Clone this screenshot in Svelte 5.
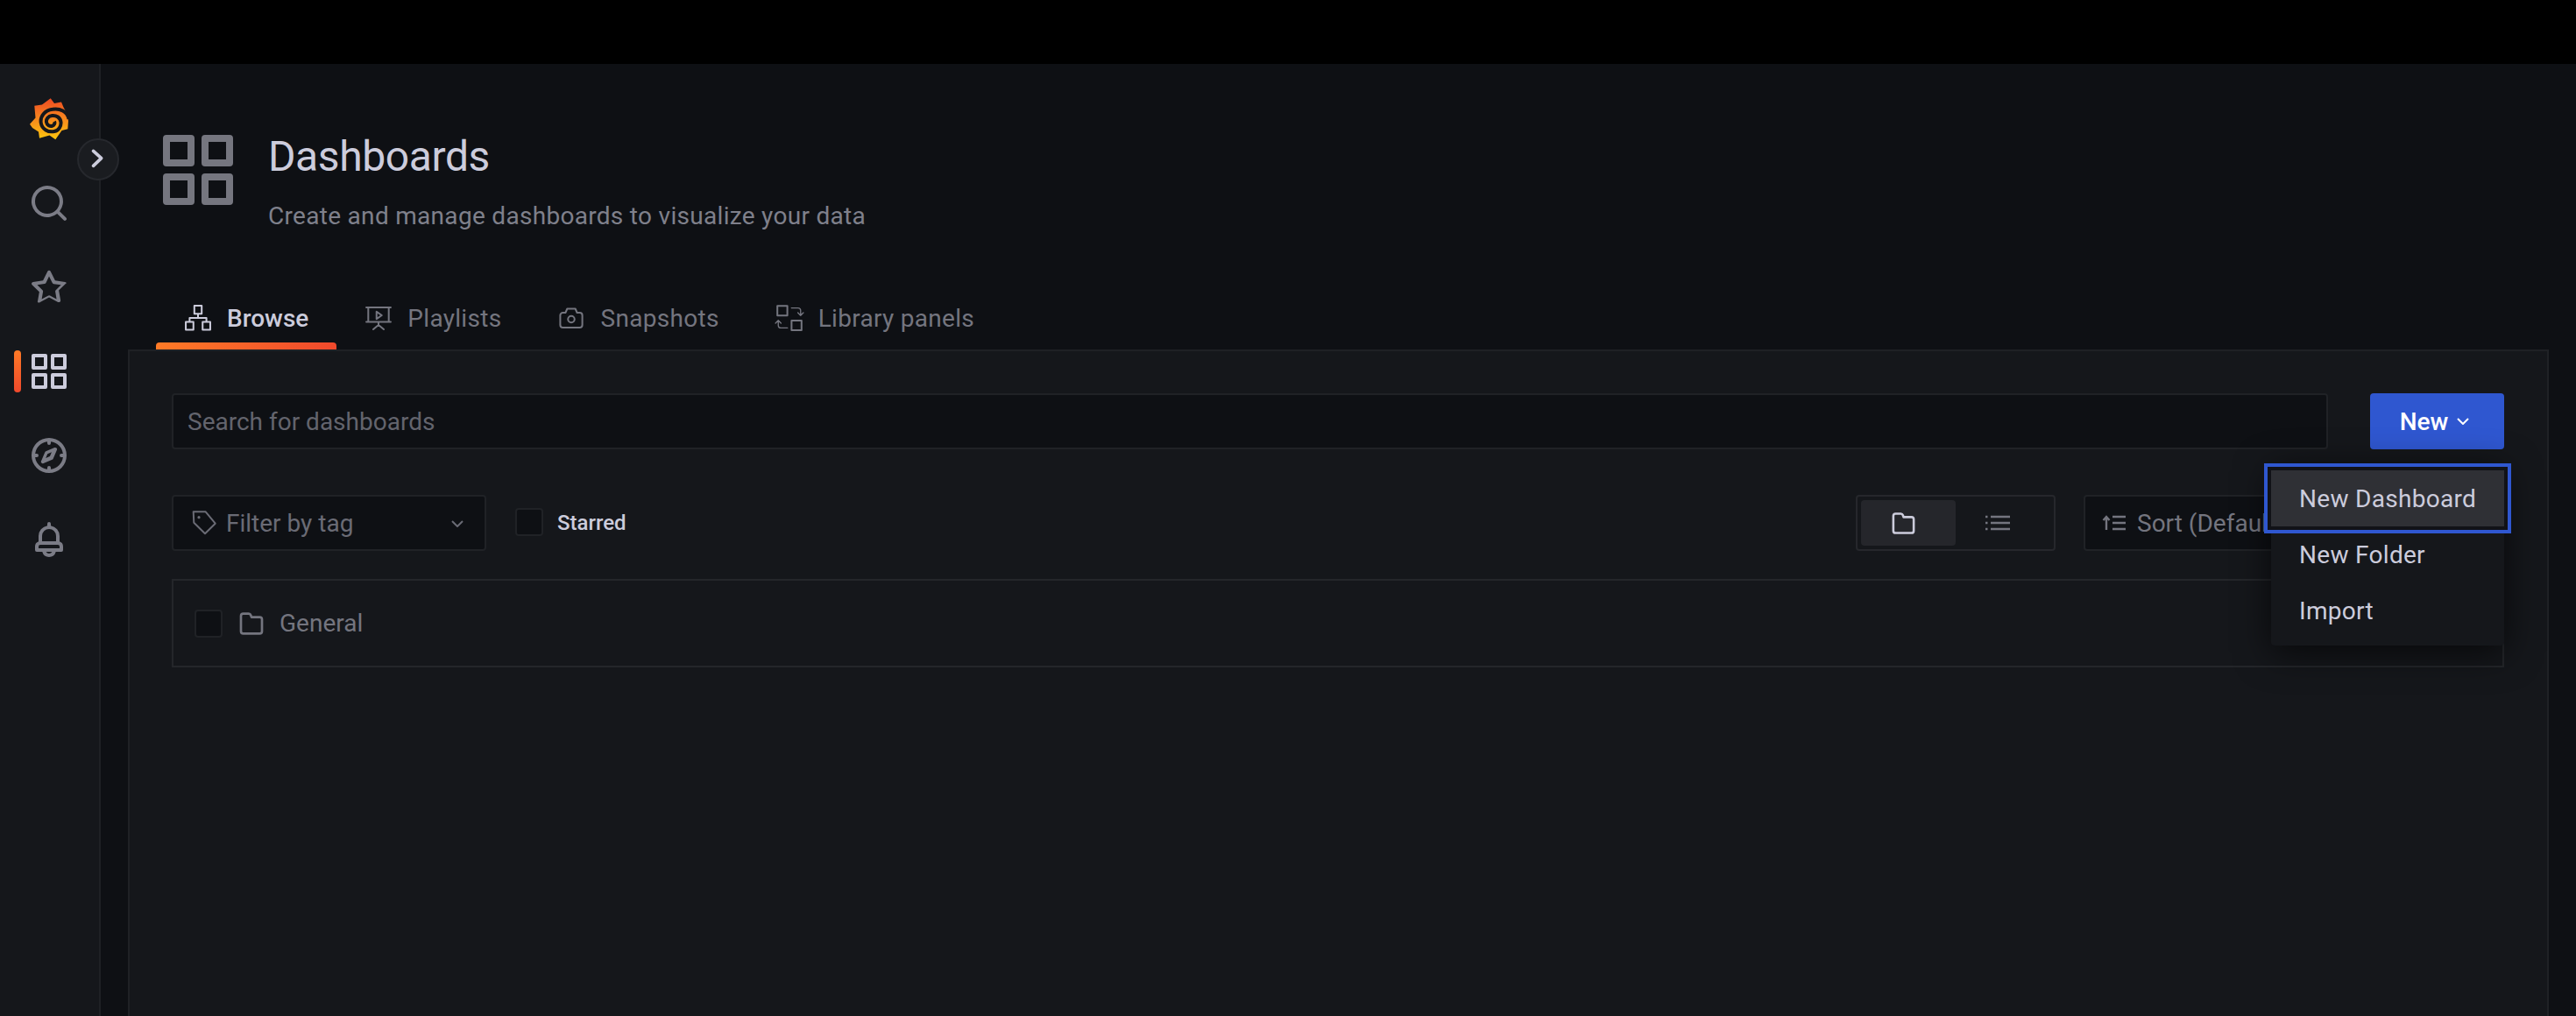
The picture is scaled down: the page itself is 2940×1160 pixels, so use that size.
<script>
  // unicons style paths, viewBox 24
  const apps = "M10,13H3a1,1,0,0,0-1,1v7a1,1,0,0,0,1,1h7a1,1,0,0,0,1-1V14A1,1,0,0,0,10,13ZM9,20H4V15H9ZM21,2H14a1,1,0,0,0-1,1v7a1,1,0,0,0,1,1h7a1,1,0,0,0,1-1V3A1,1,0,0,0,21,2ZM20,9H15V4h5Zm1,4H14a1,1,0,0,0-1,1v7a1,1,0,0,0,1,1h7a1,1,0,0,0,1-1V14A1,1,0,0,0,21,13Zm-1,7H15V15h5ZM10,2H3A1,1,0,0,0,2,3v7a1,1,0,0,0,1,1h7a1,1,0,0,0,1-1V3A1,1,0,0,0,10,2ZM9,9H4V4H9Z";
  const folder = "M19,5.5H12.72l-.32-1a3,3,0,0,0-2.84-2H5a3,3,0,0,0-3,3v13a3,3,0,0,0,3,3H19a3,3,0,0,0,3-3V8.5A3,3,0,0,0,19,5.5Zm1,13a1,1,0,0,1-1,1H5a1,1,0,0,1-1-1V5.5a1,1,0,0,1,1-1H9.56a1,1,0,0,1,.95.68l.54,1.64A1,1,0,0,0,12,7.5h7a1,1,0,0,1,1,1Z";

  const nav = [
    { name: "search", d: "M21.71,20.29,18,16.61A9,9,0,1,0,16.61,18l3.68,3.68a1,1,0,0,0,1.42,0A1,1,0,0,0,21.71,20.29ZM11,18a7,7,0,1,1,7-7A7,7,0,0,1,11,18Z" },
    { name: "star", d: "M22,9.67A1,1,0,0,0,21.14,9l-5.69-.83L12.9,3a1,1,0,0,0-1.8,0L8.55,8.16,2.86,9a1,1,0,0,0-.81.68,1,1,0,0,0,.25,1l4.13,4-1,5.68A1,1,0,0,0,6.9,20.44L12,17.77l5.1,2.67a.93.93,0,0,0,.46.12,1,1,0,0,0,.59-.19,1,1,0,0,0,.4-1l-1-5.68,4.13-4A1,1,0,0,0,22,9.67Zm-6.15,4a1,1,0,0,0-.29.88l.72,4.2-3.76-2a1.06,1.06,0,0,0-.94,0l-3.76,2,.72-4.2a1,1,0,0,0-.29-.88l-3-3,4.21-.61a1,1,0,0,0,.76-.55L12,5.7l1.88,3.82a1,1,0,0,0,.76.55l4.21.61Z" },
    { name: "dashboards", d: apps, active: true },
    { name: "explore", d: "M12,2A10,10,0,1,0,22,12,10,10,0,0,0,12,2Zm1,17.93V19a1,1,0,0,0-2,0v.93A8,8,0,0,1,4.07,13H5a1,1,0,0,0,0-2H4.07A8,8,0,0,1,11,4.07V5a1,1,0,0,0,2,0V4.07A8,8,0,0,1,19.93,11H19a1,1,0,0,0,0,2h.93A8,8,0,0,1,13,19.93ZM15.14,7.55l-5,2.12a1,1,0,0,0-.53.53l-2.12,5a1,1,0,0,0,.21,1.1,1,1,0,0,0,.71.3.93.93,0,0,0,.4-.08l5-2.12a1,1,0,0,0,.53-.53l2.12-5a1,1,0,0,0-1.32-1.32Zm-2.68,4.91-2.35,1,1-2.35,2.35-1Z" },
    { name: "alerts", d: "M18,13.18V10a6,6,0,0,0-5-5.91V3a1,1,0,0,0-2,0V4.09A6,6,0,0,0,6,10v3.18A3,3,0,0,0,4,16v2a1,1,0,0,0,1,1H8.14a4,4,0,0,0,7.72,0H19a1,1,0,0,0,1-1V16A3,3,0,0,0,18,13.18ZM8,10a4,4,0,0,1,8,0v3H8ZM12,20a2,2,0,0,1-1.72-1h3.44A2,2,0,0,1,12,20Zm6-3H6V16a1,1,0,0,1,1-1H17a1,1,0,0,1,1,1Z" }
  ];

  const tabs = [
    { label: "Browse", active: true, icon: "M9.2 2.7h5.6v6.2H9.2zM2.7 15h5.8v6H2.7zM15.5 15h5.8v6h-5.8zM12 9v3M5.6 15v-3h12.8v3" },
    { label: "Playlists", icon: "M2.7 4h18.6M4.2 4v11M19.8 4v11M2.7 15h18.6M12 15v2.3M8 20.7l4-3.4 4 3.4M10.5 7.2v5.6l4-2.8z" },
    { label: "Snapshots", icon: "M5.6 8h2l1.3-3h6.2l1.3 3h2a2 2 0 0 1 2 2v7.4a2 2 0 0 1-2 2H5.6a2 2 0 0 1-2-2V10a2 2 0 0 1 2-2zM14.5 13a2.5 2.5 0 1 1-5 0 2.5 2.5 0 0 1 5 0z" },
    { label: "Library panels", icon: "M2.8 2.8h7.6v7.4H2.8zM13.6 14h7.6v7.4h-7.6z", thin: "M13.5 4.4h5a2 2 0 0 1 2 2v3.4M18.4 8l2.1 2.2L22.6 8M10.5 19.6h-5a2 2 0 0 1-2-2v-3.4M1.4 16l2.1-2.2L5.6 16" }
  ];

  const menuItems = ["New Dashboard", "New Folder", "Import"];
</script>

<div class="page">
  <div class="topbar"></div>
  <div class="shell">
    <aside class="sidebar">
      <svg class="logo" viewBox="0 0 44 48" width="44" height="48">
        <defs>
          <linearGradient id="logo-grad" x1="0" y1="0" x2="0" y2="1">
            <stop offset="0" stop-color="#ee4a22" />
            <stop offset="0.45" stop-color="#f6821f" />
            <stop offset="1" stop-color="#fcc60e" />
          </linearGradient>
        </defs>
        <path fill="url(#logo-grad)" d="M23.7 .3 L28 6 L36 4.5 L38.5 10.5 L42 17 L44 26 L43.3 35.3 L36.5 37 L29.3 47.3 L22.5 42.5 L11 45.7 L10 38.5 L3 34 L0 29.7 L6.5 22.5 L5.3 8.7 L14 7.5 Z" />
        <path fill="none" stroke="#15171b" stroke-width="4" d="M44.5 24 C43 15 34 11.5 26 12.8 C17 14 11.5 21 12.8 28.5 C14 35.5 21 39.5 28 38 C33 37 36 32 35.5 27.5 C35 22 30 19.5 25.5 20 C21 20.5 18.5 24 19 27.5 C19.5 31 23 32.5 25.5 31.8 C28 31 29 28.5 28 26.8" />
      </svg>
      {#each nav as item}
        <div class="nav-item" class:active={item.active}>
          <svg viewBox="0 0 24 24" width="48" height="48"><path d={item.d} /></svg>
        </div>
      {/each}
      <button class="expand" aria-label="Expand navigation">
        <svg viewBox="0 0 48 48" width="44" height="44"><path d="M18 13.5 L28 22.5 L18 32" /></svg>
      </button>
    </aside>

    <main class="main">
      <header class="page-header">
        <svg class="header-icon" viewBox="0 0 24 24" width="96" height="96"><path d={apps} /></svg>
        <div class="header-text">
          <h1>Dashboards</h1>
          <p>Create and manage dashboards to visualize your data</p>
        </div>
      </header>

      <nav class="tabs">
        {#each tabs as tab}
          <div class="tab" class:active={tab.active}>
            <svg viewBox="0 0 24 24" width="36" height="36">
              <path d={tab.icon} />
              {#if tab.thin}<path class="thin" d={tab.thin} />{/if}
            </svg>
            <span>{tab.label}</span>
          </div>
        {/each}
      </nav>

      <section class="card">
        <div class="search-row">
          <div class="input search">Search for dashboards</div>
          <div class="new-wrap">
            <button class="new-btn">
              New
              <svg viewBox="0 0 14 8" width="14" height="8"><path d="M1 1 L7 7 L13 1" /></svg>
            </button>
            <div class="menu">
              {#each menuItems as label, i}
                <div class="menu-item" class:focused={i === 0}>{label}</div>
              {/each}
            </div>
          </div>
        </div>

        <div class="filter-row">
          <div class="input filter">
            <svg class="tag" viewBox="0 0 32 32" width="32" height="32">
              <path d="M3.7 3.3H17.7L28.7 16.7L17 28.3L4.3 15.7Z" />
              <circle cx="10" cy="9.7" r="1.6" />
            </svg>
            <span>Filter by tag</span>
            <svg class="caret" viewBox="0 0 14 8" width="14" height="8"><path d="M1 1 L7 7 L13 1" /></svg>
          </div>
          <div class="checkbox"></div>
          <span class="starred">Starred</span>
          <div class="spacer"></div>
          <div class="layout-switch">
            <div class="layout-btn selected">
              <svg viewBox="0 0 24 24" width="31" height="31"><path d={folder} /></svg>
            </div>
            <div class="layout-btn">
              <svg class="list" viewBox="0 0 28 18" width="28" height="18">
                <path d="M6 2H28M6 9H28M6 16H28" />
                <path d="M0 2H2.5M0 9H2.5M0 16H2.5" />
              </svg>
            </div>
          </div>
          <div class="input sort">
            <svg viewBox="0 0 28 18" width="28" height="18">
              <path d="M5 17V3M1.5 6L5 2L8.5 6M12 2H27M12 9H27M12 16H27" />
            </svg>
            <span>Sort (Default A-Z)</span>
          </div>
        </div>

        <div class="folder-row">
          <div class="checkbox"></div>
          <svg viewBox="0 0 24 24" width="32" height="32"><path d={folder} /></svg>
          <span>General</span>
        </div>
      </section>
    </main>
  </div>
</div>

<style>
  :global(body) {
    background: #000;
    overflow: hidden;
  }

  .page {
    height: 1160px;
    display: flex;
    flex-direction: column;
    font-family: Roboto, "Liberation Sans", sans-serif;
    font-size: 28px;
    color: #ccccdc;
    overflow: hidden;
  }

  .topbar {
    height: 73px;
    flex: none;
    background: #000;
  }

  .shell {
    flex: 1;
    display: flex;
    min-height: 0;
  }

  .sidebar {
    position: relative;
    width: 115px;
    flex: none;
    box-sizing: border-box;
    border-right: 2px solid #1f2125;
    background: #15171b;
    padding: 39px 0 0 32px;
    display: flex;
    flex-direction: column;
    gap: 48px;
  }

  .logo {
    display: block;
    margin-left: 2px;
  }

  .nav-item {
    position: relative;
    width: 48px;
    height: 48px;
  }

  .nav-item svg {
    display: block;
    fill: #7b7c86;
  }

  .nav-item.active svg {
    fill: #ccccdc;
  }

  .nav-item.active::before {
    content: "";
    position: absolute;
    left: -16px;
    top: 0;
    width: 8px;
    height: 48px;
    border-radius: 4px;
    background: linear-gradient(180deg, #ff7a26, #f0492c);
  }

  .expand {
    position: absolute;
    left: 88px;
    top: 85px;
    width: 48px;
    height: 48px;
    box-sizing: border-box;
    padding: 0;
    border: 2px solid #26282d;
    border-radius: 50%;
    background: #1a1c20;
    z-index: 2;
  }

  .expand svg {
    display: block;
    fill: none;
    stroke: #ccccdc;
    stroke-width: 4;
    stroke-linecap: round;
    stroke-linejoin: round;
  }

  .main {
    flex: 1;
    min-width: 0;
    background: #0e1014;
  }

  .page-header {
    display: flex;
    gap: 32px;
    padding: 73px 0 0 63px;
    height: 200px;
    box-sizing: border-box;
  }

  .header-icon {
    fill: #75767f;
    flex: none;
  }

  .header-text {
    padding-top: 5px;
  }

  h1 {
    margin: 0;
    font-size: 48px;
    font-weight: 400;
    line-height: 56px;
    letter-spacing: -0.4px;
    color: #ccccdc;
  }

  .header-text p {
    margin: 20px 0 0;
    line-height: 40px;
    letter-spacing: 0.3px;
    color: #7f808b;
  }

  .tabs {
    display: flex;
    margin-left: 63px;
    height: 126px;
    align-items: flex-end;
  }

  .tab {
    position: relative;
    height: 72px;
    box-sizing: border-box;
    padding: 0 32px 0 30px;
    display: flex;
    align-items: center;
    gap: 15px;
    letter-spacing: 0.3px;
    color: #74757f;
  }

  .tab svg {
    fill: none;
    stroke: #74757f;
    stroke-width: 1.35;
    stroke-linejoin: round;
    stroke-linecap: round;
  }

  .tab svg .thin {
    stroke-width: 0.9;
  }

  .tab.active {
    color: #ccccdc;
    font-weight: 500;
    letter-spacing: 0;
  }

  .tab.active svg {
    stroke: #ccccdc;
  }

  .tab.active::after {
    content: "";
    position: absolute;
    left: 0;
    right: 0;
    bottom: 0;
    height: 8px;
    border-radius: 4px 4px 0 0;
    background: linear-gradient(90deg, #ff7a26, #f0492c);
  }

  .card {
    margin: 0 31px;
    min-height: 900px;
    box-sizing: border-box;
    border: 2px solid #1f2125;
    border-bottom: 0;
    background: #15171b;
    padding: 48px 49px 0 48px;
  }

  .search-row {
    display: flex;
    gap: 48px;
    height: 64px;
  }

  .input {
    box-sizing: border-box;
    height: 64px;
    border: 2px solid #202226;
    border-radius: 4px;
    background: #0e1014;
    color: #63646d;
    display: flex;
    align-items: center;
  }

  .search {
    flex: 1;
    padding-left: 16px;
  }

  .new-wrap {
    position: relative;
    width: 153px;
    flex: none;
  }

  .new-btn {
    width: 100%;
    height: 64px;
    border: 0;
    border-radius: 4px;
    background: #2f57d0;
    color: #fff;
    font: 500 28px Roboto, "Liberation Sans", sans-serif;
    display: flex;
    align-items: center;
    justify-content: center;
    gap: 10px;
    padding: 0 6px 0 0;
  }

  .new-btn svg {
    fill: none;
    stroke: #fff;
    stroke-width: 2;
  }

  .menu {
    position: absolute;
    top: 80px;
    right: 0;
    width: 266px;
    box-sizing: border-box;
    padding: 8px 0;
    background: #15171b;
    border-radius: 4px;
    box-shadow: 0 8px 40px rgba(0, 0, 0, 0.65);
    z-index: 3;
  }

  .menu-item {
    height: 64px;
    padding-left: 32px;
    display: flex;
    align-items: center;
    letter-spacing: 0.3px;
    color: #ccccdc;
  }

  .menu-item.focused {
    background: #2f3035;
    box-shadow: 0 0 0 4px #111217, 0 0 0 8px #2f57d0;
  }

  .filter-row {
    display: flex;
    align-items: center;
    margin-top: 52px;
    height: 64px;
  }

  .filter {
    width: 359px;
    padding-left: 19px;
    color: #6a6b75;
  }

  .filter .tag {
    flex: none;
    fill: none;
    stroke: #6a6b75;
    stroke-width: 2;
    stroke-linejoin: round;
  }

  .filter .tag circle {
    fill: #6a6b75;
    stroke: none;
  }

  .filter span {
    margin-left: 9px;
  }

  .caret {
    margin-left: auto;
    margin-right: 24px;
    margin-top: 2px;
    fill: none;
    stroke: #6a6b75;
    stroke-width: 2;
  }

  .checkbox {
    box-sizing: border-box;
    width: 32px;
    height: 32px;
    flex: none;
    border: 2px solid #202226;
    border-radius: 4px;
    background: #0e1014;
  }

  .filter-row > .checkbox {
    margin: -2px 16px 0 33px;
  }

  .starred {
    font-size: 24px;
    font-weight: 500;
    color: #ccccdc;
  }

  .spacer {
    flex: 1;
  }

  .layout-switch {
    box-sizing: border-box;
    width: 228px;
    height: 64px;
    border: 2px solid #26272c;
    border-radius: 4px;
    padding: 4px;
    display: flex;
  }

  .layout-btn {
    width: 108px;
    height: 52px;
    padding-right: 12px;
    box-sizing: border-box;
    border-radius: 4px;
    display: flex;
    align-items: center;
    justify-content: center;
  }

  .layout-btn.selected {
    background: #25262b;
  }

  .layout-btn svg {
    fill: #ccccdc;
  }

  .layout-btn .list {
    fill: none;
    stroke: #74757f;
    stroke-width: 2.6;
  }

  .sort {
    width: 480px;
    margin-left: 32px;
    padding-left: 19px;
    gap: 12px;
    color: #74757f;
  }

  .sort svg {
    flex: none;
    fill: none;
    stroke: #74757f;
    stroke-width: 2.4;
  }

  .folder-row {
    box-sizing: border-box;
    height: 101px;
    margin-top: 32px;
    border: 2px solid #24262a;
    display: flex;
    align-items: center;
    padding-left: 24px;
    color: #74757f;
  }

  .folder-row svg {
    margin: 0 16px 0 17px;
    fill: #74757f;
  }
</style>
